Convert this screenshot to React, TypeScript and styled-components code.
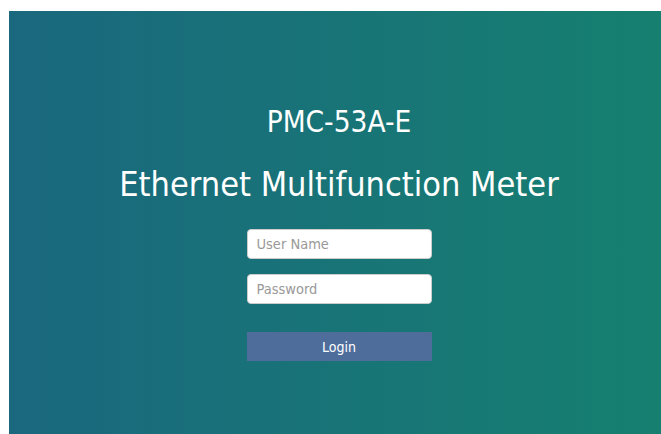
import styled, { createGlobalStyle } from 'styled-components';

const GlobalStyle = createGlobalStyle`
  html, body {
    margin: 0;
    padding: 0;
    overflow: hidden;
    background: #ffffff;
  }
  body {
    font-family: 'DejaVu Sans Condensed', 'DejaVu Sans', sans-serif;
  }
`;

const Page = styled.div`
  padding: 11px 0 0 9px;
`;

const Panel = styled.div`
  width: 660px;
  height: 440px;
  background: linear-gradient(to right, #1a687e, #168070);
  display: flex;
  flex-direction: column;
  align-items: center;
  padding-top: 93px;
  box-sizing: border-box;
  color: #ffffff;
`;

const Model = styled.h2`
  margin: 0;
  font-size: 29.5px;
  font-weight: normal;
  line-height: 36px;
`;

const Title = styled.h1`
  margin: 24px 0 0;
  font-size: 34px;
  font-weight: normal;
  line-height: 40px;
`;

const Form = styled.form`
  width: 185px;
  margin-top: 25px;
  display: flex;
  flex-direction: column;
`;

const Field = styled.input`
  height: 30px;
  box-sizing: border-box;
  border: 1px solid #cccccc;
  border-radius: 4px;
  padding: 0 9px;
  font-family: inherit;
  font-size: 14.5px;
  color: #555555;
  background: #ffffff;
  margin-bottom: 15px;

  &::placeholder {
    color: #999999;
  }
`;

const Button = styled.button`
  height: 29px;
  margin-top: 13px;
  border: none;
  background: #4f6d9b;
  color: #ffffff;
  font-family: inherit;
  font-size: 14px;
  cursor: pointer;
`;

const App = () => {
  return (
    <Page>
      <GlobalStyle />
      <Panel>
        <Model>PMC-53A-E</Model>
        <Title>Ethernet Multifunction Meter</Title>
        <Form onSubmit={(e) => e.preventDefault()}>
          <Field type="text" placeholder="User Name" />
          <Field type="password" placeholder="Password" />
          <Button type="submit">Login</Button>
        </Form>
      </Panel>
    </Page>
  );
};

export default App;
